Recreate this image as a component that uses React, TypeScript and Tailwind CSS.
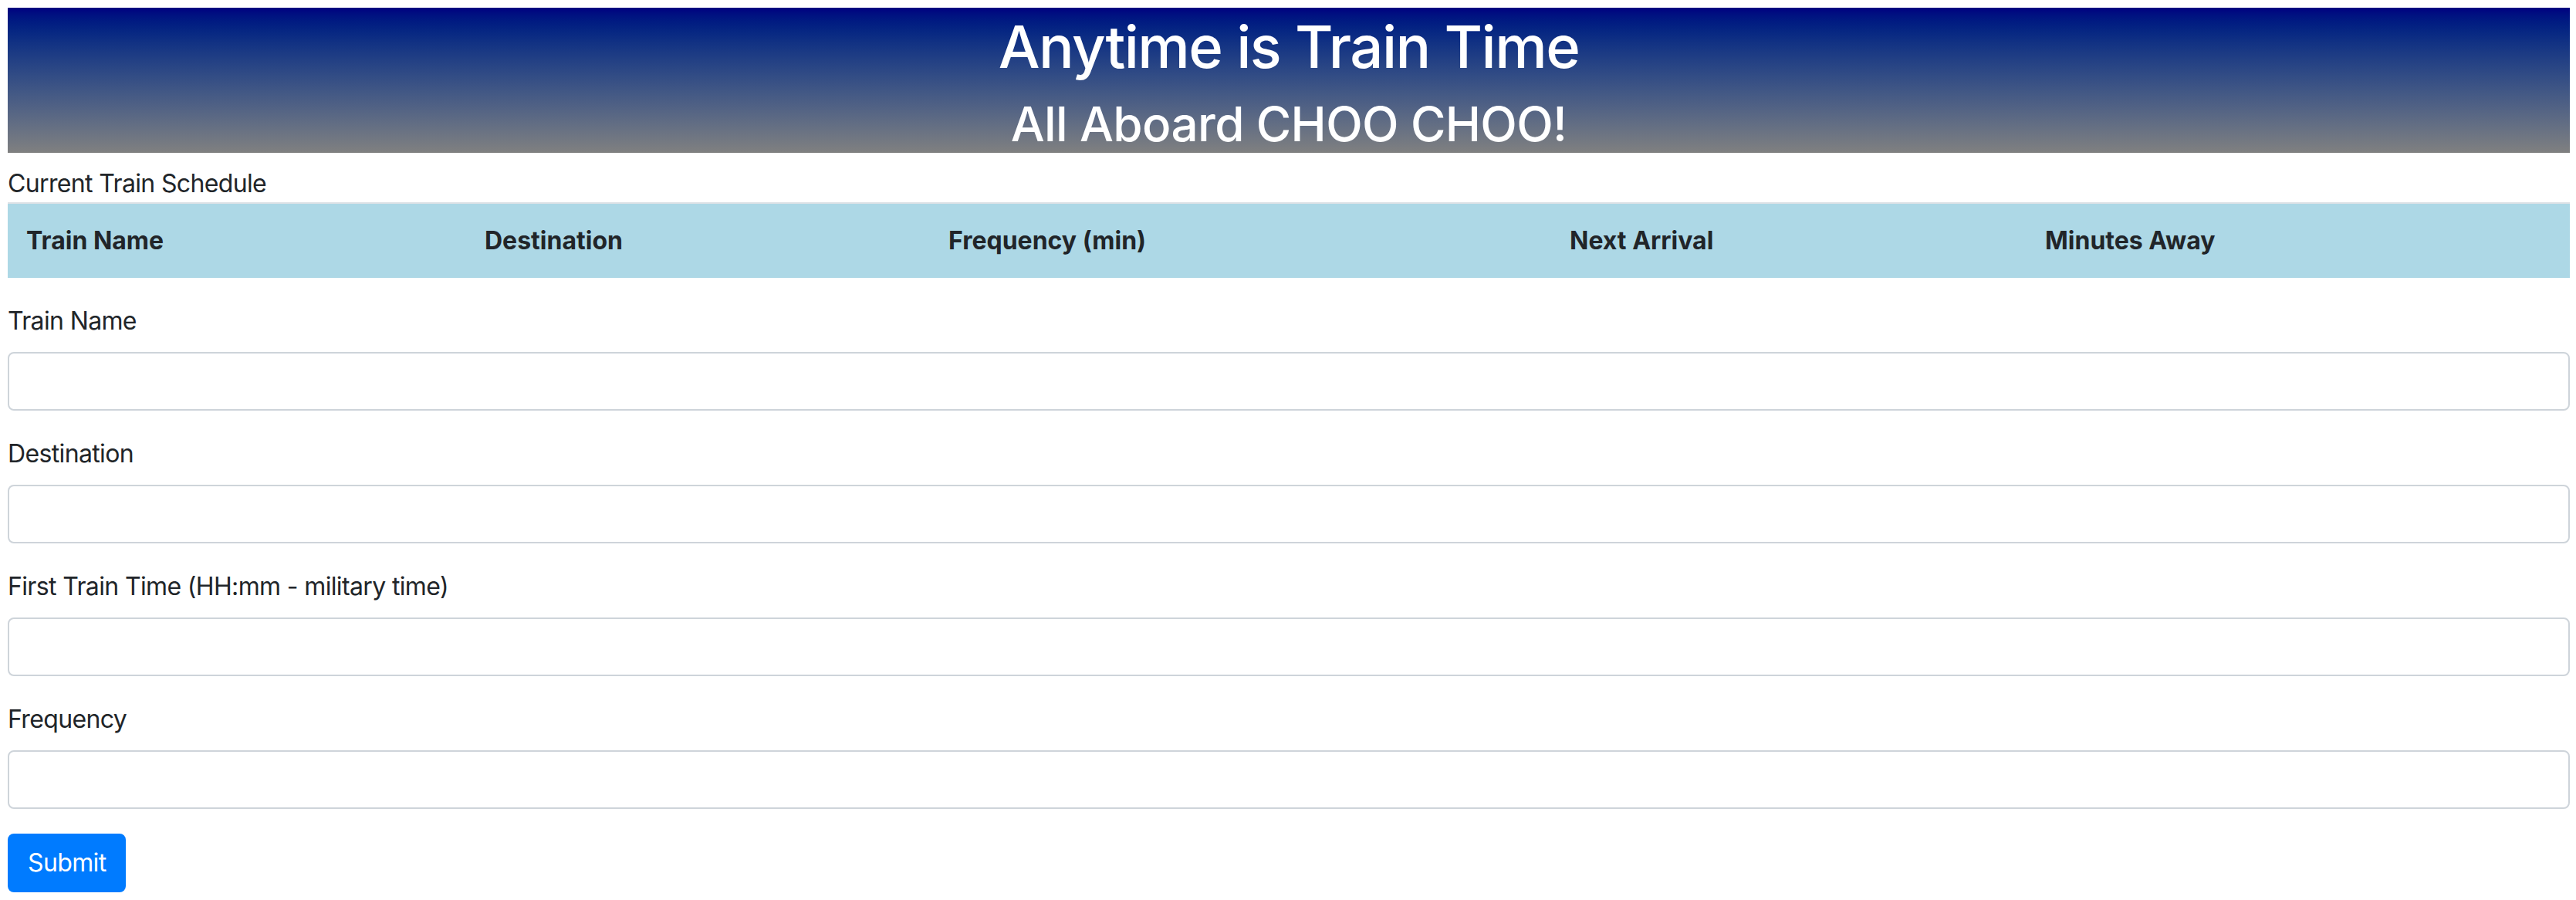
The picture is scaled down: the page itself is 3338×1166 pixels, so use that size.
import React from "react";

const cols = [
  { label: "Train Name", w: "w-[594px]" },
  { label: "Destination", w: "w-[601px]" },
  { label: "Frequency (min)", w: "w-[805px]" },
  { label: "Next Arrival", w: "w-[616px]" },
  { label: "Minutes Away", w: "" },
];

const fields = [
  "Train Name",
  "Destination",
  "First Train Time (HH:mm - military time)",
  "Frequency",
];

export default function App() {
  return (
    <div className="min-h-[1166px] bg-white pl-[10px] pr-[8px] pt-[10px] font-['Inter','Liberation_Sans',sans-serif] text-[32px] leading-[48px] tracking-[-0.02em] text-[#212529]">
      <header className="h-[188px] overflow-hidden bg-linear-to-b from-[#000080] to-[#808080] text-center text-white">
        <h1 className="mb-[12px] text-[76px] font-medium leading-[100px] tracking-[-0.02em]">Anytime is Train Time</h1>
        <h2 className="text-[62px] font-medium leading-[77px] tracking-[-0.01em]">All Aboard CHOO CHOO!</h2>
      </header>

      <div className="mt-[16px]">Current Train Schedule</div>

      <table className="mb-[32px] w-full table-fixed border-collapse">
        <thead>
          <tr className="bg-[#add8e6]">
            {cols.map((c) => (
              <th
                key={c.label}
                className={`${c.w} border-t-2 border-[#dee2e6] px-[24px] py-[24px] text-left font-bold tracking-normal`}
              >
                {c.label}
              </th>
            ))}
          </tr>
        </thead>
        <tbody></tbody>
      </table>

      <form onSubmit={(e) => e.preventDefault()}>
        {fields.map((f) => (
          <div key={f} className="mb-[32px]">
            <label className="mb-[16px] block">{f}</label>
            <input
              type="text"
              className="block h-[76px] w-full rounded-[8px] border-2 border-[#ced4da] bg-white px-[24px] text-[32px] outline-none"
            />
          </div>
        ))}
        <button
          type="submit"
          className="rounded-[8px] border-2 border-[#007bff] bg-[#007bff] px-[24px] py-[12px] text-[32px] leading-[48px] tracking-[-0.02em] text-white"
        >
          Submit
        </button>
      </form>
    </div>
  );
}
